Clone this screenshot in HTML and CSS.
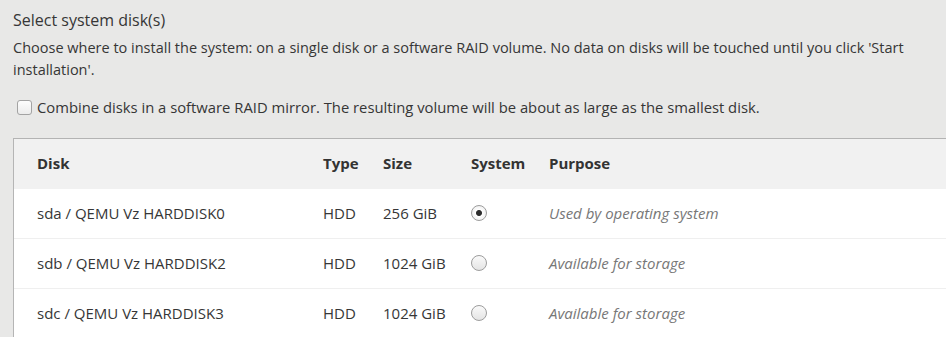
FILE: index.html
```html
<!DOCTYPE html>
<html lang="en">
<head>
    <meta charset="UTF-8">
    <meta name="viewport" content="width=device-width, initial-scale=1.0">
    <title>Select system disk(s)</title>
    <link rel="stylesheet" href="styles.css">
</head>
<body>
    <div class="page">
        <h2 class="title">Select system disk(s)</h2>
        <p class="intro">Choose where to install the system: on a single disk or a software RAID volume. No data on disks will be touched until you click 'Start installation'.</p>
        <label class="raid">
            <input type="checkbox">
            <span>Combine disks in a software RAID mirror. The resulting volume will be about as large as the smallest disk.</span>
        </label>
        <div class="table-wrap">
            <table class="disks">
                <thead>
                    <tr>
                        <th class="col-disk">Disk</th>
                        <th class="col-type">Type</th>
                        <th class="col-size">Size</th>
                        <th class="col-system">System</th>
                        <th>Purpose</th>
                    </tr>
                </thead>
                <tbody>
                    <tr>
                        <td>sda / QEMU Vz HARDDISK0</td>
                        <td>HDD</td>
                        <td>256 GiB</td>
                        <td><input type="radio" name="system" checked></td>
                        <td class="purpose">Used by operating system</td>
                    </tr>
                    <tr>
                        <td>sdb / QEMU Vz HARDDISK2</td>
                        <td>HDD</td>
                        <td>1024 GiB</td>
                        <td><input type="radio" name="system"></td>
                        <td class="purpose">Available for storage</td>
                    </tr>
                    <tr>
                        <td>sdc / QEMU Vz HARDDISK3</td>
                        <td>HDD</td>
                        <td>1024 GiB</td>
                        <td><input type="radio" name="system"></td>
                        <td class="purpose">Available for storage</td>
                    </tr>
                </tbody>
            </table>
        </div>
    </div>
</body>
</html>
```

FILE: styles.css
```css
body {
    margin: 0;
    padding: 0;
    background-color: #e8e8e7;
    font-family: "Open Sans", "DejaVu Sans", sans-serif;
    color: #363636;
    overflow: hidden;
}
.page {
    padding: 7px 0 0 13px;
}
.title {
    font-size: 16px;
    font-weight: normal;
    margin: 0 0 4px 0;
    line-height: 26px;
}
.intro {
    font-size: 14.5px;
    line-height: 22px;
    margin: 0 13px 16px 0;
}
.raid {
    display: flex;
    align-items: center;
    gap: 5px;
    font-size: 14.8px;
    line-height: 20px;
    margin-bottom: 21px;
}
.raid input {
    appearance: none;
    margin: 0 0 0 4px;
    width: 15px;
    height: 15px;
    border: 1px solid #a3a3a3;
    border-radius: 3px;
    background: linear-gradient(#fdfdfd, #ececec);
    box-sizing: border-box;
}
.table-wrap {
    margin-right: -40px;
    border-left: 1px solid #b5b5b5;
    border-top: 1px solid #b3b3b3;
    background-color: #fff;
}
.disks {
    width: 100%;
    table-layout: fixed;
    border-collapse: collapse;
    font-size: 15px;
}
.disks th, .disks td {
    text-align: left;
    padding: 0 0 2px 0;
    height: 47px;
    vertical-align: middle;
    white-space: nowrap;
}
.disks th {
    background-color: #f1f1f1;
    font-weight: bold;
    color: #333;
    height: 47px;
    padding-bottom: 3px;
}
.disks td {
    border-bottom: 1px solid #efefef;
}
.disks th:first-child, .disks td:first-child {
    padding-left: 23px;
}
.col-disk {
    width: 286px;
}
.col-type {
    width: 60px;
}
.col-size {
    width: 88px;
}
.col-system {
    width: 78px;
}
.disks input {
    appearance: none;
    display: block;
    margin: 0;
    width: 16px;
    height: 16px;
    border: 1px solid #9d9d9d;
    border-radius: 50%;
    background: linear-gradient(#fafafa, #e4e4e4);
    box-sizing: border-box;
}
.disks input:checked {
    background: radial-gradient(circle, #2b2b2b 0, #2b2b2b 2.5px, #fdfdfd 3.5px, #e9e9e9 100%);
}
.purpose {
    font-style: italic;
    color: #777;
}
```
